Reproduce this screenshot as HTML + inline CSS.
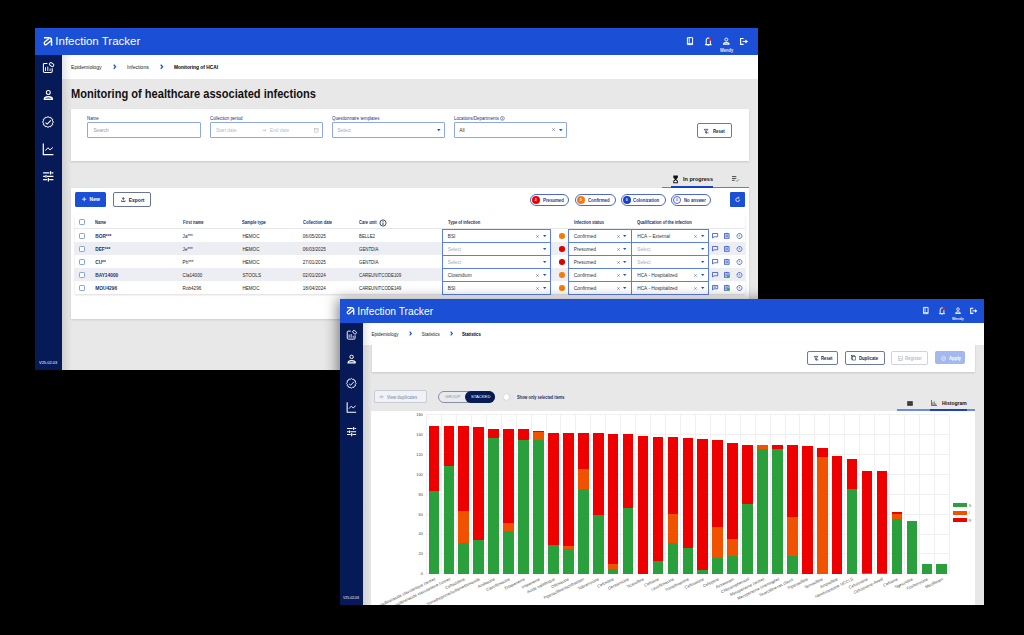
<!DOCTYPE html>
<html><head><meta charset="utf-8"><style>
html,body{margin:0;padding:0;}
body{width:1024px;height:635px;background:#000;position:relative;overflow:hidden;font-family:"Liberation Sans",sans-serif;}
body>div{position:absolute;box-sizing:border-box;}
.t{white-space:nowrap;line-height:1;}
</style></head><body>
<div style="left:35.00px;top:28.00px;width:723.00px;height:342.00px;background:#e8e8e8"></div>
<div style="left:35.00px;top:28.00px;width:723.00px;height:27.00px;background:#1b4fd6"></div>
<div style="left:35.00px;top:55.00px;width:27.00px;height:315.00px;background:#071a58"></div>
<div style="left:62.00px;top:55.00px;width:696.00px;height:24.00px;background:#fff"></div>
<svg style="position:absolute;overflow:visible;left:43.70px;top:37.20px;" width="8.60" height="8.70" viewBox="0 0 24 24" fill="none"><path d="M0 2.05 H13.5 Q21 2.05 21 9.5 V24" stroke="#fff" stroke-width="4.1"/><path d="M13.6 3.9 L2.03 14.04 A4.2 4.2 0 0 0 7.57 20.36 L19.2 10.2" stroke="#fff" stroke-width="3.7"/></svg>
<div class="t" style="left:55.30px;top:36.20px;font-size:11.5px;color:#fff;font-weight:normal;">Infection Tracker</div>
<svg style="position:absolute;overflow:visible;left:686.00px;top:36.00px;" width="64.00" height="11.00" viewBox="0 0 64 11" fill="none"><path d="M1.4 1.6 H6.6 V8.6 H1.4 Z" stroke="#fff" stroke-width="1"/><path d="M3.2 1.8 V6.6 M1.6 7.4 H6.4" stroke="#fff" stroke-width="0.9"/><path d="M20.2 8.1 V4.8 Q20.2 2 22.3 2 Q24.4 2 24.4 4.8 V8.1 L25.2 8.6 H19.4 Z" stroke="#fff" stroke-width="1.05" stroke-linejoin="round"/><path d="M21.5 9.3 H23.1" stroke="#fff" stroke-width="0.8"/><circle cx="24.1" cy="3.4" r="1.3" fill="#ee1111"/><circle cx="40.3" cy="3.6" r="1.5" stroke="#fff" stroke-width="0.95"/><path d="M37.5 8.3 Q37.5 6.6 40.3 6.6 Q43.1 6.6 43.1 8.3 Z" stroke="#fff" stroke-width="1.1" stroke-linejoin="round"/><path d="M57.6 2.5 H54.6 V8.3 H57.6" stroke="#fff" stroke-width="1.15"/><path d="M56.6 5.5 H60.4" stroke="#fff" stroke-width="1.1"/><path d="M59.4 3.5 L62 5.5 L59.4 7.5 Z" fill="#fff"/></svg>
<div class="t" style="left:720.20px;top:48.84px;font-size:4.6px;color:#e8ecff;font-weight:bold;transform:scaleX(0.88);transform-origin:0 0;">Wendy</div>
<svg style="position:absolute;overflow:visible;left:42.00px;top:61.00px;" width="13.00" height="13.00" viewBox="0 0 13 13" fill="none"><path d="M5.4 2.4 H2.6 Q1.4 2.4 1.4 3.6 V10.2 Q1.4 11.4 2.6 11.4 H9 Q10.2 11.4 10.2 10.2 V7.2" stroke="#fff" stroke-width="1.05"/><path d="M3.5 9.9 V6.2 M5.8 9.9 V5.6 M8.1 9.9 V7.6" stroke="#fff" stroke-width="0.95"/><rect x="7.3" y="2.2" width="4.6" height="2.8" rx="1.2" transform="rotate(38 9.6 3.6)" stroke="#fff" stroke-width="0.95"/></svg>
<svg style="position:absolute;overflow:visible;left:42.00px;top:87.00px;" width="13.00" height="14.00" viewBox="0 0 13 14" fill="none"><circle cx="6.3" cy="5.5" r="1.95" stroke="#fff" stroke-width="1.1"/><path d="M2.3 12.2 Q2.2 9.7 6.3 9.7 Q10.4 9.7 10.4 12.2 Z" stroke="#fff" stroke-width="1.4" stroke-linejoin="round"/></svg>
<svg style="position:absolute;overflow:visible;left:42.00px;top:116.00px;" width="12.00" height="12.00" viewBox="0 0 12 12" fill="none"><polygon points="6.00,0.50 7.19,1.56 8.75,1.24 9.25,2.75 10.76,3.25 10.44,4.81 11.50,6.00 10.44,7.19 10.76,8.75 9.25,9.25 8.75,10.76 7.19,10.44 6.00,11.50 4.81,10.44 3.25,10.76 2.75,9.25 1.24,8.75 1.56,7.19 0.50,6.00 1.56,4.81 1.24,3.25 2.75,2.75 3.25,1.24 4.81,1.56" stroke="#fff" stroke-width="1.0" stroke-linejoin="round"/><path d="M3.5 6.6 L5.2 8.1 L8.9 4.3" stroke="#fff" stroke-width="1.05"/></svg>
<svg style="position:absolute;overflow:visible;left:42.00px;top:142.00px;" width="13.00" height="14.00" viewBox="0 0 13 14" fill="none"><path d="M1.3 1.4 V12.7 H11.4" stroke="#fff" stroke-width="1.2"/><path d="M3.4 8.6 L5.9 5.8 L8 7.8 L10.9 5.4" stroke="#fff" stroke-width="1.0"/></svg>
<svg style="position:absolute;overflow:visible;left:42.00px;top:170.00px;" width="13.00" height="13.00" viewBox="0 0 13 13" fill="none"><path d="M1.1 2.8 H7.4 M9.5 2.8 H11.4 M1.1 6.4 H3.2 M5.0 6.4 H11.4 M1.1 9.6 H5.2 M7.3 9.6 H11.4" stroke="#fff" stroke-width="1.25"/><path d="M8.6 1.2 V4.4 M4.0 5.0 V7.8 M6.4 8.0 V11.4" stroke="#fff" stroke-width="1.25"/></svg>
<div class="t" style="left:39.00px;top:360.80px;font-size:4.2px;color:#fff;font-weight:normal;transform:scaleX(0.95);transform-origin:0 0;">V25.02.03</div>
<div style="left:62.00px;top:55.00px;width:10.00px;height:315.00px;background:linear-gradient(90deg,rgba(0,0,0,0.10),rgba(0,0,0,0))"></div>
<div class="t" style="left:71.00px;top:65.11px;font-size:5.1px;color:#222;font-weight:normal;">Epidemiology</div>
<svg style="position:absolute;overflow:visible;left:112.52px;top:64.20px;" width="3.36" height="5.60" viewBox="0 0 6 10" fill="none"><path d="M1.3 1.3 L4.6 5 L1.3 8.7" stroke="#2050d8" stroke-width="2.3"/></svg>
<div class="t" style="left:127.00px;top:65.11px;font-size:5.1px;color:#222;font-weight:normal;">Infections</div>
<svg style="position:absolute;overflow:visible;left:160.22px;top:64.20px;" width="3.36" height="5.60" viewBox="0 0 6 10" fill="none"><path d="M1.3 1.3 L4.6 5 L1.3 8.7" stroke="#2050d8" stroke-width="2.3"/></svg>
<div class="t" style="left:174.00px;top:65.94px;font-size:4.85px;color:#000;font-weight:bold;">Monitoring of HCAI</div>
<div class="t" style="left:71.00px;top:87.45px;font-size:13px;color:#111;font-weight:bold;transform:scaleX(0.852);transform-origin:0 0;">Monitoring of healthcare associated infections</div>
<div style="left:71.00px;top:109.00px;width:678.00px;height:52.00px;background:#fff;box-shadow:0 1px 2px rgba(0,0,0,0.15)"></div>
<div class="t" style="left:87.30px;top:117.02px;font-size:4.5px;color:#26306a;font-weight:normal;transform:scaleX(0.97);transform-origin:0 0;">Name</div>
<div style="left:87.30px;top:122.00px;width:113.50px;height:15.60px;border:1px solid #8fa6ea;border-radius:1px;background:#fff"></div>
<div class="t" style="left:93.40px;top:129.11px;font-size:4.8px;color:#999;font-weight:normal;">Search</div>
<div class="t" style="left:209.80px;top:117.02px;font-size:4.5px;color:#26306a;font-weight:normal;transform:scaleX(0.97);transform-origin:0 0;">Collection period</div>
<div style="left:209.80px;top:122.00px;width:113.20px;height:15.60px;border:1px solid #8fa6ea;border-radius:1px;background:#fff"></div>
<div class="t" style="left:215.90px;top:129.11px;font-size:4.8px;color:#bbb;font-weight:normal;">Start date</div>
<svg style="position:absolute;overflow:visible;left:261.50px;top:128.80px;" width="4.60" height="2.60" viewBox="0 0 10 6" fill="none"><path d="M0 3 H9 M6.5 0.8 L9 3 L6.5 5.2" stroke="#999" stroke-width="1"/></svg>
<div class="t" style="left:270.00px;top:129.11px;font-size:4.8px;color:#bbb;font-weight:normal;">End date</div>
<svg style="position:absolute;overflow:visible;left:313.50px;top:127.50px;" width="4.60" height="4.60" viewBox="0 0 10 10" fill="none"><rect x="1" y="1.5" width="8" height="7.5" stroke="#aaa" stroke-width="1"/><path d="M1 4 H9" stroke="#aaa"/></svg>
<div class="t" style="left:331.80px;top:117.02px;font-size:4.5px;color:#26306a;font-weight:normal;transform:scaleX(0.97);transform-origin:0 0;">Questionnaire templates</div>
<div style="left:331.80px;top:122.00px;width:112.80px;height:15.60px;border:1px solid #8fa6ea;border-radius:1px;background:#fff"></div>
<div class="t" style="left:337.60px;top:129.11px;font-size:4.8px;color:#aaa;font-weight:normal;">Select</div>
<svg style="position:absolute;overflow:visible;left:436.80px;top:128.92px;" width="3.60" height="2.16" viewBox="0 0 10 6" fill="none"><path d="M0 0 H10 L5 6 Z" fill="#2050d8"/></svg>
<div class="t" style="left:454.30px;top:117.02px;font-size:4.5px;color:#26306a;font-weight:normal;transform:scaleX(0.97);transform-origin:0 0;">Locations/Departments</div>
<svg style="position:absolute;overflow:visible;left:500.40px;top:116.00px;" width="4.80" height="4.80" viewBox="0 0 10 10" fill="none"><circle cx="5" cy="5" r="4" stroke="#1f2a55" stroke-width="1"/><path d="M5 4.2 V7.5 M5 2.5 V3.2" stroke="#1f2a55" stroke-width="1"/></svg>
<div style="left:454.30px;top:122.00px;width:112.60px;height:15.60px;border:1px solid #8fa6ea;border-radius:1px;background:#fff"></div>
<div class="t" style="left:459.20px;top:129.11px;font-size:4.8px;color:#333;font-weight:normal;">All</div>
<svg style="position:absolute;overflow:visible;left:551.90px;top:128.40px;" width="3.20" height="3.20" viewBox="0 0 10 10" fill="none"><path d="M1 1 L9 9 M9 1 L1 9" stroke="#4a64c0" stroke-width="1.9"/></svg>
<svg style="position:absolute;overflow:visible;left:559.00px;top:128.92px;" width="3.60" height="2.16" viewBox="0 0 10 6" fill="none"><path d="M0 0 H10 L5 6 Z" fill="#2050d8"/></svg>
<div style="left:697.20px;top:123.20px;width:34.60px;height:15.00px;border:1px solid #6f789e;border-radius:2px;background:#fff"></div>
<svg style="position:absolute;overflow:visible;left:704.40px;top:128.60px;" width="4.60" height="4.60" viewBox="0 0 10 10" fill="none"><path d="M0.5 0.8 H8.5 L5.5 4.5 V9.5 L3.5 8.5 V4.5 Z" stroke="#1f2a55" stroke-width="1.5"/><path d="M7 7 L9.5 9.5 M9.5 7 L7 9.5" stroke="#1f2a55" stroke-width="1"/></svg>
<div class="t" style="left:713.00px;top:129.84px;font-size:4.8px;color:#1a2250;font-weight:bold;transform:scaleX(0.9);transform-origin:0 0;">Reset</div>
<div style="left:662.00px;top:186.90px;width:87.00px;height:1.30px;background:#5a7ee6"></div>
<div style="left:671.00px;top:186.20px;width:42.00px;height:2.00px;background:#1840c8"></div>
<svg style="position:absolute;overflow:visible;left:672.60px;top:174.60px;" width="5.20" height="8.60" viewBox="0 0 10 16" fill="none"><path d="M0.6 0.6 H9.4 V5 L6.2 8 L9.4 11 V15.4 H0.6 V11 L3.8 8 L0.6 5 Z" fill="#111"/><path d="M2.4 13.8 V11.8 L5 9.6 L7.6 11.8 V13.8 Z" fill="#fff"/></svg>
<div class="t" style="left:683.00px;top:177.13px;font-size:5.5px;color:#111;font-weight:bold;">In progress</div>
<svg style="position:absolute;overflow:visible;left:731.50px;top:176.30px;" width="7.60" height="6.00" viewBox="0 0 14 11" fill="none"><path d="M0 1 H8 M0 4.5 H8 M0 8 H5" stroke="#222" stroke-width="1.4"/><path d="M7.5 8 L9.5 10 L13 6" stroke="#2a9d3a" stroke-width="1.4"/></svg>
<div style="left:71.00px;top:188.00px;width:678.00px;height:131.00px;background:#fff;box-shadow:0 1px 2px rgba(0,0,0,0.12)"></div>
<div style="left:74.60px;top:192.20px;width:31.20px;height:14.60px;background:#1b4fd6;border-radius:1.5px"></div>
<svg style="position:absolute;overflow:visible;left:81.60px;top:197.40px;" width="4.40" height="4.40" viewBox="0 0 4.4 4.4" fill="none"><path d="M2.2 0.2 V4.2 M0.2 2.2 H4.2" stroke="#fff" stroke-width="0.8"/></svg>
<div class="t" style="left:89.60px;top:197.44px;font-size:5px;color:#fff;font-weight:bold;">New</div>
<div style="left:113.30px;top:192.20px;width:37.40px;height:14.80px;border:1px solid #6a7399;border-radius:2px;background:#fff"></div>
<svg style="position:absolute;overflow:visible;left:120.60px;top:196.60px;" width="4.60" height="5.00" viewBox="0 0 10 11" fill="none"><path d="M5 7.5 V1.5 M2.2 4.2 L5 1.4 L7.8 4.2 M1 9.8 H9 M1 7.5 V9.8 M9 7.5 V9.8" stroke="#1f2a55" stroke-width="1.7"/></svg>
<div class="t" style="left:128.70px;top:197.54px;font-size:5px;color:#1f2a55;font-weight:bold;">Export</div>
<div style="left:530.10px;top:194.00px;width:39.30px;height:11.50px;border:1px solid #4a68d0;border-radius:6px;background:#fff"></div>
<div style="left:531.80px;top:195.6px;width:8.4px;height:8.4px;border-radius:50%;box-sizing:border-box;background:#ee0000"></div>
<div class="t" style="left:534.80px;top:198.66px;font-size:3.4px;color:#fff;font-weight:bold;">2</div>
<div class="t" style="left:543.10px;top:198.74px;font-size:4.7px;color:#2b3a86;font-weight:bold;transform:scaleX(0.92);transform-origin:0 0;">Presumed</div>
<div style="left:575.00px;top:194.00px;width:40.50px;height:11.50px;border:1px solid #4a68d0;border-radius:6px;background:#fff"></div>
<div style="left:576.70px;top:195.6px;width:8.4px;height:8.4px;border-radius:50%;box-sizing:border-box;background:#f47c0c"></div>
<div class="t" style="left:579.70px;top:198.66px;font-size:3.4px;color:#fff;font-weight:bold;">3</div>
<div class="t" style="left:587.80px;top:198.74px;font-size:4.7px;color:#2b3a86;font-weight:bold;transform:scaleX(0.92);transform-origin:0 0;">Confirmed</div>
<div style="left:621.00px;top:194.00px;width:44.60px;height:11.50px;border:1px solid #4a68d0;border-radius:6px;background:#fff"></div>
<div style="left:622.70px;top:195.6px;width:8.4px;height:8.4px;border-radius:50%;box-sizing:border-box;background:#1b40c8"></div>
<div class="t" style="left:625.70px;top:198.66px;font-size:3.4px;color:#fff;font-weight:bold;">0</div>
<div class="t" style="left:633.40px;top:198.74px;font-size:4.75px;color:#2b3a86;font-weight:bold;transform:scaleX(0.92);transform-origin:0 0;">Colonization</div>
<div style="left:671.20px;top:194.00px;width:40.20px;height:11.50px;border:1px solid #4a68d0;border-radius:6px;background:#fff"></div>
<div style="left:672.90px;top:195.6px;width:8.4px;height:8.4px;border-radius:50%;box-sizing:border-box;border:0.8px solid #4a68d0;background:#fff"></div>
<div class="t" style="left:675.90px;top:198.66px;font-size:3.4px;color:#4a68d0;font-weight:bold;">0</div>
<div class="t" style="left:683.50px;top:198.74px;font-size:4.7px;color:#2b3a86;font-weight:bold;transform:scaleX(0.92);transform-origin:0 0;">No answer</div>
<div style="left:730.00px;top:192.00px;width:15.00px;height:15.00px;background:#1b4fd6;border-radius:1px"></div>
<svg style="position:absolute;overflow:visible;left:734.80px;top:196.80px;" width="5.40" height="5.40" viewBox="0 0 10 10" fill="none"><path d="M8.5 5 A3.5 3.5 0 1 1 5 1.5 H7" stroke="#fff" stroke-width="1.4"/><path d="M6 0 L8 1.5 L6 3" stroke="#fff" stroke-width="1.2"/></svg>
<div style="left:74.60px;top:215.20px;width:670.40px;height:78.40px;background:#fff;box-shadow:0 0.5px 2px rgba(0,0,0,0.15)"></div>
<div style="left:74.40px;top:228.20px;width:670.60px;height:0.70px;background:#e4e7ef"></div>
<div style="left:74.40px;top:242.00px;width:670.60px;height:13.00px;background:#eceef3"></div>
<div style="left:74.40px;top:268.00px;width:670.60px;height:13.00px;background:#eceef3"></div>
<div style="left:78.70px;top:219.10px;width:6.20px;height:6.20px;border:0.8px solid #86a0ec;border-radius:1.2px;background:#fff"></div>
<div class="t" style="left:95.20px;top:221.34px;font-size:4.5px;color:#283060;font-weight:bold;transform:scaleX(0.9);transform-origin:0 0;">Name</div>
<div class="t" style="left:182.60px;top:221.34px;font-size:4.5px;color:#283060;font-weight:bold;transform:scaleX(0.9);transform-origin:0 0;">First name</div>
<div class="t" style="left:242.40px;top:221.34px;font-size:4.5px;color:#283060;font-weight:bold;transform:scaleX(0.9);transform-origin:0 0;">Sample type</div>
<div class="t" style="left:302.80px;top:221.34px;font-size:4.5px;color:#283060;font-weight:bold;transform:scaleX(0.9);transform-origin:0 0;">Collection date</div>
<div class="t" style="left:358.50px;top:221.34px;font-size:4.5px;color:#283060;font-weight:bold;transform:scaleX(0.9);transform-origin:0 0;">Care unit</div>
<div class="t" style="left:447.70px;top:221.34px;font-size:4.5px;color:#283060;font-weight:bold;transform:scaleX(0.9);transform-origin:0 0;">Type of infection</div>
<div class="t" style="left:573.70px;top:221.34px;font-size:4.5px;color:#283060;font-weight:bold;transform:scaleX(0.9);transform-origin:0 0;">Infection status</div>
<div class="t" style="left:637.20px;top:221.34px;font-size:4.5px;color:#283060;font-weight:bold;transform:scaleX(0.9);transform-origin:0 0;">Qualification of the infection</div>
<svg style="position:absolute;overflow:visible;left:379.20px;top:218.60px;" width="8.00" height="8.00" viewBox="0 0 8 8" fill="none"><circle cx="4" cy="4" r="3.1" stroke="#1f2a55" stroke-width="0.85"/><path d="M4 3.5 V6 M4 2 V2.8" stroke="#1f2a55" stroke-width="0.9"/></svg>
<div style="left:78.70px;top:233.00px;width:6.20px;height:6.20px;border:0.8px solid #86a0ec;border-radius:1.2px;background:#fff"></div>
<div class="t" style="left:95.20px;top:235.04px;font-size:4.8px;color:#23306a;font-weight:bold;">BOR***</div>
<div class="t" style="left:182.60px;top:235.21px;font-size:4.6px;color:#262626;font-weight:normal;">Ja***</div>
<div class="t" style="left:242.40px;top:235.21px;font-size:4.6px;color:#262626;font-weight:normal;">HEMOC</div>
<div class="t" style="left:302.80px;top:235.21px;font-size:4.6px;color:#262626;font-weight:normal;">06/05/2025</div>
<div class="t" style="left:358.50px;top:235.21px;font-size:4.7px;color:#262626;font-weight:normal;transform:scaleX(0.93);transform-origin:0 0;">BELLE2</div>
<div style="left:442.00px;top:229.00px;width:109.00px;height:14.00px;border:1px solid #5b7fe0;background:#fff"></div>
<div class="t" style="left:447.70px;top:235.21px;font-size:4.8px;color:#333;font-weight:normal;">BSI</div>
<svg style="position:absolute;overflow:visible;left:536.00px;top:234.60px;" width="3.00" height="3.00" viewBox="0 0 10 10" fill="none"><path d="M1 1 L9 9 M9 1 L1 9" stroke="#4a64c0" stroke-width="1.9"/></svg>
<svg style="position:absolute;overflow:visible;left:542.80px;top:235.08px;" width="3.40" height="2.04" viewBox="0 0 10 6" fill="none"><path d="M0 0 H10 L5 6 Z" fill="#2050d8"/></svg>
<div style="left:559.3px;top:233.30px;width:5.6px;height:5.6px;border-radius:50%;background:#f47c0c"></div>
<div style="left:568.00px;top:229.00px;width:64.00px;height:14.00px;border:1px solid #5b7fe0;background:#fff"></div>
<div class="t" style="left:573.70px;top:235.21px;font-size:4.9px;color:#333;font-weight:normal;">Confirmed</div>
<svg style="position:absolute;overflow:visible;left:617.00px;top:234.60px;" width="3.00" height="3.00" viewBox="0 0 10 10" fill="none"><path d="M1 1 L9 9 M9 1 L1 9" stroke="#4a64c0" stroke-width="1.9"/></svg>
<svg style="position:absolute;overflow:visible;left:623.30px;top:235.08px;" width="3.40" height="2.04" viewBox="0 0 10 6" fill="none"><path d="M0 0 H10 L5 6 Z" fill="#2050d8"/></svg>
<div style="left:631.00px;top:229.00px;width:78.00px;height:14.00px;border:1px solid #5b7fe0;background:#fff"></div>
<div class="t" style="left:637.20px;top:235.21px;font-size:4.8px;color:#333;font-weight:normal;">HCA – External</div>
<svg style="position:absolute;overflow:visible;left:694.30px;top:234.60px;" width="3.00" height="3.00" viewBox="0 0 10 10" fill="none"><path d="M1 1 L9 9 M9 1 L1 9" stroke="#4a64c0" stroke-width="1.9"/></svg>
<svg style="position:absolute;overflow:visible;left:701.10px;top:235.08px;" width="3.40" height="2.04" viewBox="0 0 10 6" fill="none"><path d="M0 0 H10 L5 6 Z" fill="#2050d8"/></svg>
<svg style="position:absolute;overflow:visible;left:712.10px;top:233.40px;" width="6.20" height="5.40" viewBox="0 0 6.2 5.4" fill="none"><path d="M0.5 0.5 H5.7 V3.8 H2.1 L0.5 5 Z" stroke="#3a5ad0" stroke-width="0.85" stroke-linejoin="round"/></svg>
<svg style="position:absolute;overflow:visible;left:724.10px;top:233.30px;" width="5.60" height="5.80" viewBox="0 0 5.6 5.8" fill="none"><rect x="0.5" y="0.7" width="4.6" height="4.6" fill="#c9d4f4" stroke="#3a5ad0" stroke-width="0.8"/><path d="M1.5 2.3 H4.1 M1.5 3.6 H4.1" stroke="#3a5ad0" stroke-width="0.6"/><path d="M1.8 0.4 H3.8" stroke="#3a5ad0" stroke-width="0.8"/></svg>
<svg style="position:absolute;overflow:visible;left:736.10px;top:233.20px;" width="6.00" height="5.80" viewBox="0 0 6 5.8" fill="none"><path d="M1.2 2.0 A2.5 2.5 0 1 1 1.3 4.2" stroke="#3a5ad0" stroke-width="0.8"/><path d="M0.2 2.9 H2.2" stroke="#3a5ad0" stroke-width="0.8"/><path d="M3.5 1.8 V3.1 L4.3 3.7" stroke="#3a5ad0" stroke-width="0.6"/></svg>
<div style="left:78.70px;top:246.00px;width:6.20px;height:6.20px;border:0.8px solid #86a0ec;border-radius:1.2px;background:#fff"></div>
<div class="t" style="left:95.20px;top:248.04px;font-size:4.8px;color:#23306a;font-weight:bold;">DEF***</div>
<div class="t" style="left:182.60px;top:248.21px;font-size:4.6px;color:#262626;font-weight:normal;">Je***</div>
<div class="t" style="left:242.40px;top:248.21px;font-size:4.6px;color:#262626;font-weight:normal;">HEMOC</div>
<div class="t" style="left:302.80px;top:248.21px;font-size:4.6px;color:#262626;font-weight:normal;">06/03/2025</div>
<div class="t" style="left:358.50px;top:248.21px;font-size:4.7px;color:#262626;font-weight:normal;transform:scaleX(0.93);transform-origin:0 0;">GENTDIA</div>
<div style="left:442.00px;top:242.00px;width:109.00px;height:14.00px;border:1px solid #5b7fe0;background:#fff"></div>
<div class="t" style="left:447.70px;top:248.21px;font-size:4.8px;color:#aaa;font-weight:normal;">Select</div>
<svg style="position:absolute;overflow:visible;left:542.80px;top:248.08px;" width="3.40" height="2.04" viewBox="0 0 10 6" fill="none"><path d="M0 0 H10 L5 6 Z" fill="#2050d8"/></svg>
<div style="left:559.3px;top:246.30px;width:5.6px;height:5.6px;border-radius:50%;background:#e00000"></div>
<div style="left:568.00px;top:242.00px;width:64.00px;height:14.00px;border:1px solid #5b7fe0;background:#fff"></div>
<div class="t" style="left:573.70px;top:248.21px;font-size:4.9px;color:#333;font-weight:normal;">Presumed</div>
<svg style="position:absolute;overflow:visible;left:617.00px;top:247.60px;" width="3.00" height="3.00" viewBox="0 0 10 10" fill="none"><path d="M1 1 L9 9 M9 1 L1 9" stroke="#4a64c0" stroke-width="1.9"/></svg>
<svg style="position:absolute;overflow:visible;left:623.30px;top:248.08px;" width="3.40" height="2.04" viewBox="0 0 10 6" fill="none"><path d="M0 0 H10 L5 6 Z" fill="#2050d8"/></svg>
<div style="left:631.00px;top:242.00px;width:78.00px;height:14.00px;border:1px solid #5b7fe0;background:#fff"></div>
<div class="t" style="left:637.20px;top:248.21px;font-size:4.8px;color:#aaa;font-weight:normal;">Select</div>
<svg style="position:absolute;overflow:visible;left:701.10px;top:248.08px;" width="3.40" height="2.04" viewBox="0 0 10 6" fill="none"><path d="M0 0 H10 L5 6 Z" fill="#2050d8"/></svg>
<svg style="position:absolute;overflow:visible;left:712.10px;top:246.40px;" width="6.20" height="5.40" viewBox="0 0 6.2 5.4" fill="none"><path d="M0.5 0.5 H5.7 V3.8 H2.1 L0.5 5 Z" stroke="#3a5ad0" stroke-width="0.85" stroke-linejoin="round"/></svg>
<svg style="position:absolute;overflow:visible;left:724.10px;top:246.30px;" width="5.60" height="5.80" viewBox="0 0 5.6 5.8" fill="none"><rect x="0.5" y="0.7" width="4.6" height="4.6" fill="#c9d4f4" stroke="#3a5ad0" stroke-width="0.8"/><path d="M1.5 2.3 H4.1 M1.5 3.6 H4.1" stroke="#3a5ad0" stroke-width="0.6"/><path d="M1.8 0.4 H3.8" stroke="#3a5ad0" stroke-width="0.8"/></svg>
<svg style="position:absolute;overflow:visible;left:736.10px;top:246.20px;" width="6.00" height="5.80" viewBox="0 0 6 5.8" fill="none"><path d="M1.2 2.0 A2.5 2.5 0 1 1 1.3 4.2" stroke="#3a5ad0" stroke-width="0.8"/><path d="M0.2 2.9 H2.2" stroke="#3a5ad0" stroke-width="0.8"/><path d="M3.5 1.8 V3.1 L4.3 3.7" stroke="#3a5ad0" stroke-width="0.6"/></svg>
<div style="left:78.70px;top:259.00px;width:6.20px;height:6.20px;border:0.8px solid #86a0ec;border-radius:1.2px;background:#fff"></div>
<div class="t" style="left:95.20px;top:261.04px;font-size:4.8px;color:#23306a;font-weight:bold;">CU**</div>
<div class="t" style="left:182.60px;top:261.21px;font-size:4.6px;color:#262626;font-weight:normal;">Ph***</div>
<div class="t" style="left:242.40px;top:261.21px;font-size:4.6px;color:#262626;font-weight:normal;">HEMOC</div>
<div class="t" style="left:302.80px;top:261.21px;font-size:4.6px;color:#262626;font-weight:normal;">27/01/2025</div>
<div class="t" style="left:358.50px;top:261.21px;font-size:4.7px;color:#262626;font-weight:normal;transform:scaleX(0.93);transform-origin:0 0;">GENTDIA</div>
<div style="left:442.00px;top:255.00px;width:109.00px;height:14.00px;border:1px solid #5b7fe0;background:#fff"></div>
<div class="t" style="left:447.70px;top:261.21px;font-size:4.8px;color:#aaa;font-weight:normal;">Select</div>
<svg style="position:absolute;overflow:visible;left:542.80px;top:261.08px;" width="3.40" height="2.04" viewBox="0 0 10 6" fill="none"><path d="M0 0 H10 L5 6 Z" fill="#2050d8"/></svg>
<div style="left:559.3px;top:259.30px;width:5.6px;height:5.6px;border-radius:50%;background:#e00000"></div>
<div style="left:568.00px;top:255.00px;width:64.00px;height:14.00px;border:1px solid #5b7fe0;background:#fff"></div>
<div class="t" style="left:573.70px;top:261.21px;font-size:4.9px;color:#333;font-weight:normal;">Presumed</div>
<svg style="position:absolute;overflow:visible;left:617.00px;top:260.60px;" width="3.00" height="3.00" viewBox="0 0 10 10" fill="none"><path d="M1 1 L9 9 M9 1 L1 9" stroke="#4a64c0" stroke-width="1.9"/></svg>
<svg style="position:absolute;overflow:visible;left:623.30px;top:261.08px;" width="3.40" height="2.04" viewBox="0 0 10 6" fill="none"><path d="M0 0 H10 L5 6 Z" fill="#2050d8"/></svg>
<div style="left:631.00px;top:255.00px;width:78.00px;height:14.00px;border:1px solid #5b7fe0;background:#fff"></div>
<div class="t" style="left:637.20px;top:261.21px;font-size:4.8px;color:#aaa;font-weight:normal;">Select</div>
<svg style="position:absolute;overflow:visible;left:701.10px;top:261.08px;" width="3.40" height="2.04" viewBox="0 0 10 6" fill="none"><path d="M0 0 H10 L5 6 Z" fill="#2050d8"/></svg>
<svg style="position:absolute;overflow:visible;left:712.10px;top:259.40px;" width="6.20" height="5.40" viewBox="0 0 6.2 5.4" fill="none"><path d="M0.5 0.5 H5.7 V3.8 H2.1 L0.5 5 Z" stroke="#3a5ad0" stroke-width="0.85" stroke-linejoin="round"/></svg>
<svg style="position:absolute;overflow:visible;left:724.10px;top:259.30px;" width="5.60" height="5.80" viewBox="0 0 5.6 5.8" fill="none"><rect x="0.5" y="0.7" width="4.6" height="4.6" fill="#c9d4f4" stroke="#3a5ad0" stroke-width="0.8"/><path d="M1.5 2.3 H4.1 M1.5 3.6 H4.1" stroke="#3a5ad0" stroke-width="0.6"/><path d="M1.8 0.4 H3.8" stroke="#3a5ad0" stroke-width="0.8"/></svg>
<svg style="position:absolute;overflow:visible;left:736.10px;top:259.20px;" width="6.00" height="5.80" viewBox="0 0 6 5.8" fill="none"><path d="M1.2 2.0 A2.5 2.5 0 1 1 1.3 4.2" stroke="#3a5ad0" stroke-width="0.8"/><path d="M0.2 2.9 H2.2" stroke="#3a5ad0" stroke-width="0.8"/><path d="M3.5 1.8 V3.1 L4.3 3.7" stroke="#3a5ad0" stroke-width="0.6"/></svg>
<div style="left:78.70px;top:272.00px;width:6.20px;height:6.20px;border:0.8px solid #86a0ec;border-radius:1.2px;background:#fff"></div>
<div class="t" style="left:95.20px;top:274.04px;font-size:4.8px;color:#23306a;font-weight:bold;">BAY14000</div>
<div class="t" style="left:182.60px;top:274.21px;font-size:4.6px;color:#262626;font-weight:normal;">Cla14000</div>
<div class="t" style="left:242.40px;top:274.21px;font-size:4.6px;color:#262626;font-weight:normal;">STOOLS</div>
<div class="t" style="left:302.80px;top:274.21px;font-size:4.6px;color:#262626;font-weight:normal;">02/01/2024</div>
<div class="t" style="left:358.50px;top:274.21px;font-size:4.7px;color:#262626;font-weight:normal;transform:scaleX(0.93);transform-origin:0 0;">CAREUNITCODE109</div>
<div style="left:442.00px;top:268.00px;width:109.00px;height:14.00px;border:1px solid #5b7fe0;background:#fff"></div>
<div class="t" style="left:447.70px;top:274.21px;font-size:4.8px;color:#333;font-weight:normal;">Clostridium</div>
<svg style="position:absolute;overflow:visible;left:536.00px;top:273.60px;" width="3.00" height="3.00" viewBox="0 0 10 10" fill="none"><path d="M1 1 L9 9 M9 1 L1 9" stroke="#4a64c0" stroke-width="1.9"/></svg>
<svg style="position:absolute;overflow:visible;left:542.80px;top:274.08px;" width="3.40" height="2.04" viewBox="0 0 10 6" fill="none"><path d="M0 0 H10 L5 6 Z" fill="#2050d8"/></svg>
<div style="left:559.3px;top:272.30px;width:5.6px;height:5.6px;border-radius:50%;background:#f47c0c"></div>
<div style="left:568.00px;top:268.00px;width:64.00px;height:14.00px;border:1px solid #5b7fe0;background:#fff"></div>
<div class="t" style="left:573.70px;top:274.21px;font-size:4.9px;color:#333;font-weight:normal;">Confirmed</div>
<svg style="position:absolute;overflow:visible;left:617.00px;top:273.60px;" width="3.00" height="3.00" viewBox="0 0 10 10" fill="none"><path d="M1 1 L9 9 M9 1 L1 9" stroke="#4a64c0" stroke-width="1.9"/></svg>
<svg style="position:absolute;overflow:visible;left:623.30px;top:274.08px;" width="3.40" height="2.04" viewBox="0 0 10 6" fill="none"><path d="M0 0 H10 L5 6 Z" fill="#2050d8"/></svg>
<div style="left:631.00px;top:268.00px;width:78.00px;height:14.00px;border:1px solid #5b7fe0;background:#fff"></div>
<div class="t" style="left:637.20px;top:274.21px;font-size:4.8px;color:#333;font-weight:normal;">HCA - Hospitalized</div>
<svg style="position:absolute;overflow:visible;left:694.30px;top:273.60px;" width="3.00" height="3.00" viewBox="0 0 10 10" fill="none"><path d="M1 1 L9 9 M9 1 L1 9" stroke="#4a64c0" stroke-width="1.9"/></svg>
<svg style="position:absolute;overflow:visible;left:701.10px;top:274.08px;" width="3.40" height="2.04" viewBox="0 0 10 6" fill="none"><path d="M0 0 H10 L5 6 Z" fill="#2050d8"/></svg>
<svg style="position:absolute;overflow:visible;left:712.10px;top:272.40px;" width="6.20" height="5.40" viewBox="0 0 6.2 5.4" fill="none"><path d="M0.5 0.5 H5.7 V3.8 H2.1 L0.5 5 Z" stroke="#3a5ad0" stroke-width="0.85" stroke-linejoin="round"/></svg>
<svg style="position:absolute;overflow:visible;left:724.10px;top:272.30px;" width="5.60" height="5.80" viewBox="0 0 5.6 5.8" fill="none"><rect x="0.5" y="0.7" width="4.6" height="4.6" fill="#c9d4f4" stroke="#3a5ad0" stroke-width="0.8"/><path d="M1.5 2.3 H4.1 M1.5 3.6 H4.1" stroke="#3a5ad0" stroke-width="0.6"/><path d="M1.8 0.4 H3.8" stroke="#3a5ad0" stroke-width="0.8"/><circle cx="4.4" cy="4.5" r="1.4" fill="#3cb54a"/></svg>
<svg style="position:absolute;overflow:visible;left:736.10px;top:272.20px;" width="6.00" height="5.80" viewBox="0 0 6 5.8" fill="none"><path d="M1.2 2.0 A2.5 2.5 0 1 1 1.3 4.2" stroke="#3a5ad0" stroke-width="0.8"/><path d="M0.2 2.9 H2.2" stroke="#3a5ad0" stroke-width="0.8"/><path d="M3.5 1.8 V3.1 L4.3 3.7" stroke="#3a5ad0" stroke-width="0.6"/></svg>
<div style="left:78.70px;top:285.00px;width:6.20px;height:6.20px;border:0.8px solid #86a0ec;border-radius:1.2px;background:#fff"></div>
<div class="t" style="left:95.20px;top:287.04px;font-size:4.8px;color:#23306a;font-weight:bold;">MOU4296</div>
<div class="t" style="left:182.60px;top:287.21px;font-size:4.6px;color:#262626;font-weight:normal;">Rob4296</div>
<div class="t" style="left:242.40px;top:287.21px;font-size:4.6px;color:#262626;font-weight:normal;">HEMOC</div>
<div class="t" style="left:302.80px;top:287.21px;font-size:4.6px;color:#262626;font-weight:normal;">18/04/2024</div>
<div class="t" style="left:358.50px;top:287.21px;font-size:4.7px;color:#262626;font-weight:normal;transform:scaleX(0.93);transform-origin:0 0;">CAREUNITCODE149</div>
<div style="left:442.00px;top:281.00px;width:109.00px;height:14.00px;border:1px solid #5b7fe0;background:#fff"></div>
<div class="t" style="left:447.70px;top:287.21px;font-size:4.8px;color:#333;font-weight:normal;">BSI</div>
<svg style="position:absolute;overflow:visible;left:536.00px;top:286.60px;" width="3.00" height="3.00" viewBox="0 0 10 10" fill="none"><path d="M1 1 L9 9 M9 1 L1 9" stroke="#4a64c0" stroke-width="1.9"/></svg>
<svg style="position:absolute;overflow:visible;left:542.80px;top:287.08px;" width="3.40" height="2.04" viewBox="0 0 10 6" fill="none"><path d="M0 0 H10 L5 6 Z" fill="#2050d8"/></svg>
<div style="left:559.3px;top:285.30px;width:5.6px;height:5.6px;border-radius:50%;background:#f47c0c"></div>
<div style="left:568.00px;top:281.00px;width:64.00px;height:14.00px;border:1px solid #5b7fe0;background:#fff"></div>
<div class="t" style="left:573.70px;top:287.21px;font-size:4.9px;color:#333;font-weight:normal;">Confirmed</div>
<svg style="position:absolute;overflow:visible;left:617.00px;top:286.60px;" width="3.00" height="3.00" viewBox="0 0 10 10" fill="none"><path d="M1 1 L9 9 M9 1 L1 9" stroke="#4a64c0" stroke-width="1.9"/></svg>
<svg style="position:absolute;overflow:visible;left:623.30px;top:287.08px;" width="3.40" height="2.04" viewBox="0 0 10 6" fill="none"><path d="M0 0 H10 L5 6 Z" fill="#2050d8"/></svg>
<div style="left:631.00px;top:281.00px;width:78.00px;height:14.00px;border:1px solid #5b7fe0;background:#fff"></div>
<div class="t" style="left:637.20px;top:287.21px;font-size:4.8px;color:#333;font-weight:normal;">HCA - Hospitalized</div>
<svg style="position:absolute;overflow:visible;left:694.30px;top:286.60px;" width="3.00" height="3.00" viewBox="0 0 10 10" fill="none"><path d="M1 1 L9 9 M9 1 L1 9" stroke="#4a64c0" stroke-width="1.9"/></svg>
<svg style="position:absolute;overflow:visible;left:701.10px;top:287.08px;" width="3.40" height="2.04" viewBox="0 0 10 6" fill="none"><path d="M0 0 H10 L5 6 Z" fill="#2050d8"/></svg>
<svg style="position:absolute;overflow:visible;left:712.10px;top:285.40px;" width="6.20" height="5.40" viewBox="0 0 6.2 5.4" fill="none"><path d="M0.5 0.5 H5.7 V3.8 H2.1 L0.5 5 Z" stroke="#3a5ad0" stroke-width="0.85" stroke-linejoin="round"/><path d="M1.6 1.7 H4.6 M1.6 2.7 H4" stroke="#3a5ad0" stroke-width="0.6"/></svg>
<svg style="position:absolute;overflow:visible;left:724.10px;top:285.30px;" width="5.60" height="5.80" viewBox="0 0 5.6 5.8" fill="none"><rect x="0.5" y="0.7" width="4.6" height="4.6" fill="#c9d4f4" stroke="#3a5ad0" stroke-width="0.8"/><path d="M1.5 2.3 H4.1 M1.5 3.6 H4.1" stroke="#3a5ad0" stroke-width="0.6"/><path d="M1.8 0.4 H3.8" stroke="#3a5ad0" stroke-width="0.8"/><circle cx="4.4" cy="4.5" r="1.4" fill="#3cb54a"/></svg>
<svg style="position:absolute;overflow:visible;left:736.10px;top:285.20px;" width="6.00" height="5.80" viewBox="0 0 6 5.8" fill="none"><path d="M1.2 2.0 A2.5 2.5 0 1 1 1.3 4.2" stroke="#3a5ad0" stroke-width="0.8"/><path d="M0.2 2.9 H2.2" stroke="#3a5ad0" stroke-width="0.8"/><path d="M3.5 1.8 V3.1 L4.3 3.7" stroke="#3a5ad0" stroke-width="0.6"/></svg>
<div style="left:340.00px;top:299.00px;width:644.00px;height:306.00px;background:transparent;box-shadow:-3px 0 12px rgba(0,0,0,0.45)"></div>
<div style="left:340.00px;top:299.00px;width:644.00px;height:306.00px;background:#e8e8e8"></div>
<div style="left:340.00px;top:299.00px;width:644.00px;height:24.00px;background:#1b4fd6"></div>
<div style="left:340.00px;top:323.00px;width:23.00px;height:282.00px;background:#071a58"></div>
<div style="left:363.00px;top:323.00px;width:621.00px;height:21.60px;background:#fff"></div>
<div style="left:372.00px;top:344.00px;width:603.00px;height:27.80px;background:#fff;box-shadow:0 1px 2px rgba(0,0,0,0.15)"></div>
<div style="left:363.00px;top:323.00px;width:9.00px;height:282.00px;background:linear-gradient(90deg,rgba(0,0,0,0.10),rgba(0,0,0,0))"></div>
<svg style="position:absolute;overflow:visible;left:347.10px;top:307.10px;" width="7.70" height="7.70" viewBox="0 0 24 24" fill="none"><path d="M0 2.05 H13.5 Q21 2.05 21 9.5 V24" stroke="#fff" stroke-width="4.1"/><path d="M13.6 3.9 L2.03 14.04 A4.2 4.2 0 0 0 7.57 20.36 L19.2 10.2" stroke="#fff" stroke-width="3.7"/></svg>
<div class="t" style="left:357.30px;top:306.90px;font-size:10.25px;color:#fff;font-weight:normal;">Infection Tracker</div>
<svg style="position:absolute;overflow:visible;left:921.81px;top:306.11px;" width="57.28" height="9.78" viewBox="0 0 64 11" fill="none"><path d="M1.4 1.6 H6.6 V8.6 H1.4 Z" stroke="#fff" stroke-width="1"/><path d="M3.2 1.8 V6.6 M1.6 7.4 H6.4" stroke="#fff" stroke-width="0.9"/><path d="M20.2 8.1 V4.8 Q20.2 2 22.3 2 Q24.4 2 24.4 4.8 V8.1 L25.2 8.6 H19.4 Z" stroke="#fff" stroke-width="1.05" stroke-linejoin="round"/><path d="M21.5 9.3 H23.1" stroke="#fff" stroke-width="0.8"/><circle cx="24.1" cy="3.4" r="1.3" fill="#ee1111"/><circle cx="40.3" cy="3.6" r="1.5" stroke="#fff" stroke-width="0.95"/><path d="M37.5 8.3 Q37.5 6.6 40.3 6.6 Q43.1 6.6 43.1 8.3 Z" stroke="#fff" stroke-width="1.1" stroke-linejoin="round"/><path d="M57.6 2.5 H54.6 V8.3 H57.6" stroke="#fff" stroke-width="1.15"/><path d="M56.6 5.5 H60.4" stroke="#fff" stroke-width="1.1"/><path d="M59.4 3.5 L62 5.5 L59.4 7.5 Z" fill="#fff"/></svg>
<div class="t" style="left:952.30px;top:316.80px;font-size:4.1px;color:#e8ecff;font-weight:bold;transform:scaleX(0.88);transform-origin:0 0;">Wendy</div>
<svg style="position:absolute;overflow:visible;left:346.23px;top:328.87px;" width="11.57" height="11.57" viewBox="0 0 13 13" fill="none"><path d="M5.4 2.4 H2.6 Q1.4 2.4 1.4 3.6 V10.2 Q1.4 11.4 2.6 11.4 H9 Q10.2 11.4 10.2 10.2 V7.2" stroke="#fff" stroke-width="1.05"/><path d="M3.5 9.9 V6.2 M5.8 9.9 V5.6 M8.1 9.9 V7.6" stroke="#fff" stroke-width="0.95"/><rect x="7.3" y="2.2" width="4.6" height="2.8" rx="1.2" transform="rotate(38 9.6 3.6)" stroke="#fff" stroke-width="0.95"/></svg>
<svg style="position:absolute;overflow:visible;left:346.23px;top:352.01px;" width="11.57" height="12.46" viewBox="0 0 13 14" fill="none"><circle cx="6.3" cy="5.5" r="1.95" stroke="#fff" stroke-width="1.1"/><path d="M2.3 12.2 Q2.2 9.7 6.3 9.7 Q10.4 9.7 10.4 12.2 Z" stroke="#fff" stroke-width="1.4" stroke-linejoin="round"/></svg>
<svg style="position:absolute;overflow:visible;left:346.23px;top:377.82px;" width="10.68" height="10.68" viewBox="0 0 12 12" fill="none"><polygon points="6.00,0.50 7.19,1.56 8.75,1.24 9.25,2.75 10.76,3.25 10.44,4.81 11.50,6.00 10.44,7.19 10.76,8.75 9.25,9.25 8.75,10.76 7.19,10.44 6.00,11.50 4.81,10.44 3.25,10.76 2.75,9.25 1.24,8.75 1.56,7.19 0.50,6.00 1.56,4.81 1.24,3.25 2.75,2.75 3.25,1.24 4.81,1.56" stroke="#fff" stroke-width="1.0" stroke-linejoin="round"/><path d="M3.5 6.6 L5.2 8.1 L8.9 4.3" stroke="#fff" stroke-width="1.05"/></svg>
<svg style="position:absolute;overflow:visible;left:346.23px;top:400.96px;" width="11.57" height="12.46" viewBox="0 0 13 14" fill="none"><path d="M1.3 1.4 V12.7 H11.4" stroke="#fff" stroke-width="1.2"/><path d="M3.4 8.6 L5.9 5.8 L8 7.8 L10.9 5.4" stroke="#fff" stroke-width="1.0"/></svg>
<svg style="position:absolute;overflow:visible;left:346.23px;top:425.88px;" width="11.57" height="11.57" viewBox="0 0 13 13" fill="none"><path d="M1.1 2.8 H7.4 M9.5 2.8 H11.4 M1.1 6.4 H3.2 M5.0 6.4 H11.4 M1.1 9.6 H5.2 M7.3 9.6 H11.4" stroke="#fff" stroke-width="1.25"/><path d="M8.6 1.2 V4.4 M4.0 5.0 V7.8 M6.4 8.0 V11.4" stroke="#fff" stroke-width="1.25"/></svg>
<div class="t" style="left:342.80px;top:597.30px;font-size:3.7px;color:#fff;font-weight:normal;transform:scaleX(0.95);transform-origin:0 0;">V25.02.03</div>
<div class="t" style="left:371.40px;top:332.92px;font-size:4.5px;color:#222;font-weight:normal;">Epidemiology</div>
<svg style="position:absolute;overflow:visible;left:408.70px;top:331.30px;" width="3.00" height="5.00" viewBox="0 0 6 10" fill="none"><path d="M1.3 1.3 L4.6 5 L1.3 8.7" stroke="#2050d8" stroke-width="2.3"/></svg>
<div class="t" style="left:421.70px;top:332.92px;font-size:4.5px;color:#222;font-weight:normal;">Statistics</div>
<svg style="position:absolute;overflow:visible;left:449.50px;top:331.30px;" width="3.00" height="5.00" viewBox="0 0 6 10" fill="none"><path d="M1.3 1.3 L4.6 5 L1.3 8.7" stroke="#2050d8" stroke-width="2.3"/></svg>
<div class="t" style="left:462.30px;top:332.74px;font-size:4.6px;color:#000;font-weight:bold;transform:scaleX(0.92);transform-origin:0 0;">Statistics</div>
<div style="left:807.20px;top:350.60px;width:31.20px;height:14.10px;border:1px solid #6f789e;border-radius:2px;background:#fff"></div>
<div class="t" style="left:821.00px;top:356.74px;font-size:4.7px;color:#1a2250;font-weight:bold;transform:scaleX(0.9);transform-origin:0 0;">Reset</div>
<svg style="position:absolute;overflow:visible;left:813.60px;top:355.60px;" width="4.60" height="4.60" viewBox="0 0 10 10" fill="none"><path d="M0.5 0.8 H8.5 L5.5 4.5 V9.5 L3.5 8.5 V4.5 Z" stroke="#1f2a55" stroke-width="1.5"/><path d="M7 7 L9.5 9.5 M9.5 7 L7 9.5" stroke="#1f2a55" stroke-width="1"/></svg>
<div style="left:844.70px;top:350.60px;width:40.00px;height:14.10px;border:1px solid #6f789e;border-radius:2px;background:#fff"></div>
<div class="t" style="left:859.00px;top:356.74px;font-size:4.7px;color:#1a2250;font-weight:bold;transform:scaleX(0.9);transform-origin:0 0;">Duplicate</div>
<svg style="position:absolute;overflow:visible;left:851.00px;top:355.20px;" width="5.00" height="5.60" viewBox="0 0 10 11" fill="none"><rect x="1" y="1" width="6" height="7" stroke="#1f2a55" stroke-width="1.1"/><rect x="3" y="3" width="6" height="7" fill="#fff" stroke="#1f2a55" stroke-width="1.1"/></svg>
<div style="left:891.00px;top:350.60px;width:36.70px;height:14.10px;border:1px solid #cfd3de;border-radius:2px;background:#fff"></div>
<div class="t" style="left:905.00px;top:356.74px;font-size:4.7px;color:#b8bcc8;font-weight:bold;transform:scaleX(0.9);transform-origin:0 0;">Register</div>
<svg style="position:absolute;overflow:visible;left:897.60px;top:355.50px;" width="5.00" height="5.00" viewBox="0 0 10 10" fill="none"><rect x="1" y="1" width="8" height="8" stroke="#b8bcc8" stroke-width="1.1"/><rect x="3" y="5" width="4" height="4" stroke="#b8bcc8"/></svg>
<div style="left:934.50px;top:351.00px;width:30.70px;height:13.40px;background:#a3b8ef;border-radius:2px"></div>
<svg style="position:absolute;overflow:visible;left:940.50px;top:355.60px;" width="5.00" height="5.00" viewBox="0 0 10 10" fill="none"><circle cx="5" cy="5" r="4" stroke="#fff" stroke-width="1.1"/><path d="M3 5 L4.5 6.5 L7 3.5" stroke="#fff" stroke-width="1.1"/></svg>
<div class="t" style="left:948.50px;top:356.74px;font-size:4.8px;color:#fff;font-weight:bold;transform:scaleX(0.9);transform-origin:0 0;">Apply</div>
<div style="left:374.40px;top:390.30px;width:52.20px;height:13.10px;border:1px solid #c9ccd6;border-radius:2px;background:#f1f2f5"></div>
<svg style="position:absolute;overflow:visible;left:379.00px;top:395.00px;" width="5.00" height="3.60" viewBox="0 0 12 8" fill="none"><path d="M1 4 Q6 -1 11 4 Q6 9 1 4 Z" stroke="#9aa0b4" stroke-width="1"/><circle cx="6" cy="4" r="1.5" fill="#9aa0b4"/></svg>
<div class="t" style="left:387.20px;top:395.84px;font-size:4.6px;color:#9aa0b4;font-weight:bold;transform:scaleX(0.88);transform-origin:0 0;">View duplicates</div>
<div style="left:438.00px;top:391.00px;width:57.30px;height:11.80px;border:1px solid #888ea6;border-radius:6px;background:#e9eaee"></div>
<div style="left:465.30px;top:391.00px;width:30.00px;height:11.80px;background:#071a58;border-radius:6px"></div>
<div class="t" style="left:444.60px;top:395.40px;font-size:4.4px;color:#8a8e9c;font-weight:normal;transform:scaleX(0.95);transform-origin:0 0;">GROUP</div>
<div class="t" style="left:470.80px;top:395.40px;font-size:4.4px;color:#fff;font-weight:normal;transform:scaleX(0.95);transform-origin:0 0;">STACKED</div>
<div style="left:503.80px;top:394.40px;width:10.80px;height:5.20px;background:#e4e5ea;border-radius:3px"></div>
<div style="left:503.9px;top:394.4px;width:5.2px;height:5.2px;border-radius:50%;background:#fff;box-shadow:0 0 1px rgba(0,0,0,0.35)"></div>
<div class="t" style="left:517.20px;top:395.84px;font-size:4.6px;color:#28305c;font-weight:bold;transform:scaleX(0.85);transform-origin:0 0;">Show only selected items</div>
<div style="left:897.00px;top:409.30px;width:77.60px;height:1.30px;background:#6a8ae8"></div>
<div style="left:929.60px;top:408.80px;width:37.20px;height:2.00px;background:#1840c8"></div>
<svg style="position:absolute;overflow:visible;left:906.50px;top:401.00px;" width="6.00" height="5.00" viewBox="0 0 12 10" fill="none"><rect x="0.5" y="0.5" width="11" height="9" fill="#222"/><path d="M0.5 5 H11.5 M4 0.5 V9.5 M8 0.5 V9.5" stroke="#888" stroke-width="0.6"/></svg>
<svg style="position:absolute;overflow:visible;left:930.50px;top:400.00px;" width="6.00" height="6.00" viewBox="0 0 12 12" fill="none"><path d="M1 0 V11 H12" stroke="#222" stroke-width="1.2"/><path d="M3.5 10 V5 M6.5 10 V3 M9.5 10 V7" stroke="#222" stroke-width="1.2"/></svg>
<div class="t" style="left:942.00px;top:401.34px;font-size:5.0px;color:#111;font-weight:bold;">Histogram</div>
<div style="left:371.30px;top:411.30px;width:603.70px;height:193.70px;background:#fff"></div>
<div style="left:426.40px;top:414.45px;width:522.80px;height:0.70px;background:#f0f0f0"></div>
<div class="t" style="left:422.80px;top:413.30px;font-size:3.9px;color:#444;transform:translateX(-100%);">160</div>
<div style="left:426.40px;top:434.30px;width:522.80px;height:0.70px;background:#f0f0f0"></div>
<div class="t" style="left:422.80px;top:433.15px;font-size:3.9px;color:#444;transform:translateX(-100%);">140</div>
<div style="left:426.40px;top:454.15px;width:522.80px;height:0.70px;background:#f0f0f0"></div>
<div class="t" style="left:422.80px;top:453.00px;font-size:3.9px;color:#444;transform:translateX(-100%);">120</div>
<div style="left:426.40px;top:474.00px;width:522.80px;height:0.70px;background:#f0f0f0"></div>
<div class="t" style="left:422.80px;top:472.85px;font-size:3.9px;color:#444;transform:translateX(-100%);">100</div>
<div style="left:426.40px;top:493.85px;width:522.80px;height:0.70px;background:#f0f0f0"></div>
<div class="t" style="left:422.80px;top:492.70px;font-size:3.9px;color:#444;transform:translateX(-100%);">80</div>
<div style="left:426.40px;top:513.70px;width:522.80px;height:0.70px;background:#f0f0f0"></div>
<div class="t" style="left:422.80px;top:512.55px;font-size:3.9px;color:#444;transform:translateX(-100%);">60</div>
<div style="left:426.40px;top:533.55px;width:522.80px;height:0.70px;background:#f0f0f0"></div>
<div class="t" style="left:422.80px;top:532.40px;font-size:3.9px;color:#444;transform:translateX(-100%);">40</div>
<div style="left:426.40px;top:553.40px;width:522.80px;height:0.70px;background:#f0f0f0"></div>
<div class="t" style="left:422.80px;top:552.25px;font-size:3.9px;color:#444;transform:translateX(-100%);">20</div>
<div style="left:426.40px;top:573.25px;width:522.80px;height:0.70px;background:#f0f0f0"></div>
<div class="t" style="left:422.80px;top:572.10px;font-size:3.9px;color:#444;transform:translateX(-100%);">0</div>
<div style="left:426.05px;top:414.80px;width:0.70px;height:158.80px;background:#f0f0f0"></div>
<div style="left:440.99px;top:414.80px;width:0.70px;height:158.80px;background:#f0f0f0"></div>
<div style="left:455.92px;top:414.80px;width:0.70px;height:158.80px;background:#f0f0f0"></div>
<div style="left:470.86px;top:414.80px;width:0.70px;height:158.80px;background:#f0f0f0"></div>
<div style="left:485.80px;top:414.80px;width:0.70px;height:158.80px;background:#f0f0f0"></div>
<div style="left:500.74px;top:414.80px;width:0.70px;height:158.80px;background:#f0f0f0"></div>
<div style="left:515.67px;top:414.80px;width:0.70px;height:158.80px;background:#f0f0f0"></div>
<div style="left:530.61px;top:414.80px;width:0.70px;height:158.80px;background:#f0f0f0"></div>
<div style="left:545.55px;top:414.80px;width:0.70px;height:158.80px;background:#f0f0f0"></div>
<div style="left:560.48px;top:414.80px;width:0.70px;height:158.80px;background:#f0f0f0"></div>
<div style="left:575.42px;top:414.80px;width:0.70px;height:158.80px;background:#f0f0f0"></div>
<div style="left:590.36px;top:414.80px;width:0.70px;height:158.80px;background:#f0f0f0"></div>
<div style="left:605.30px;top:414.80px;width:0.70px;height:158.80px;background:#f0f0f0"></div>
<div style="left:620.23px;top:414.80px;width:0.70px;height:158.80px;background:#f0f0f0"></div>
<div style="left:635.17px;top:414.80px;width:0.70px;height:158.80px;background:#f0f0f0"></div>
<div style="left:650.11px;top:414.80px;width:0.70px;height:158.80px;background:#f0f0f0"></div>
<div style="left:665.04px;top:414.80px;width:0.70px;height:158.80px;background:#f0f0f0"></div>
<div style="left:679.98px;top:414.80px;width:0.70px;height:158.80px;background:#f0f0f0"></div>
<div style="left:694.92px;top:414.80px;width:0.70px;height:158.80px;background:#f0f0f0"></div>
<div style="left:709.86px;top:414.80px;width:0.70px;height:158.80px;background:#f0f0f0"></div>
<div style="left:724.79px;top:414.80px;width:0.70px;height:158.80px;background:#f0f0f0"></div>
<div style="left:739.73px;top:414.80px;width:0.70px;height:158.80px;background:#f0f0f0"></div>
<div style="left:754.67px;top:414.80px;width:0.70px;height:158.80px;background:#f0f0f0"></div>
<div style="left:769.60px;top:414.80px;width:0.70px;height:158.80px;background:#f0f0f0"></div>
<div style="left:784.54px;top:414.80px;width:0.70px;height:158.80px;background:#f0f0f0"></div>
<div style="left:799.48px;top:414.80px;width:0.70px;height:158.80px;background:#f0f0f0"></div>
<div style="left:814.42px;top:414.80px;width:0.70px;height:158.80px;background:#f0f0f0"></div>
<div style="left:829.35px;top:414.80px;width:0.70px;height:158.80px;background:#f0f0f0"></div>
<div style="left:844.29px;top:414.80px;width:0.70px;height:158.80px;background:#f0f0f0"></div>
<div style="left:859.23px;top:414.80px;width:0.70px;height:158.80px;background:#f0f0f0"></div>
<div style="left:874.16px;top:414.80px;width:0.70px;height:158.80px;background:#f0f0f0"></div>
<div style="left:889.10px;top:414.80px;width:0.70px;height:158.80px;background:#f0f0f0"></div>
<div style="left:904.04px;top:414.80px;width:0.70px;height:158.80px;background:#f0f0f0"></div>
<div style="left:918.98px;top:414.80px;width:0.70px;height:158.80px;background:#f0f0f0"></div>
<div style="left:933.91px;top:414.80px;width:0.70px;height:158.80px;background:#f0f0f0"></div>
<div style="left:948.85px;top:414.80px;width:0.70px;height:158.80px;background:#f0f0f0"></div>
<div style="left:428.60px;top:425.72px;width:10.60px;height:65.50px;background:#ee0000"></div>
<div style="left:428.60px;top:491.22px;width:10.60px;height:82.38px;background:#29a03b"></div>
<div style="left:443.54px;top:425.72px;width:10.60px;height:40.69px;background:#ee0000"></div>
<div style="left:443.54px;top:466.41px;width:10.60px;height:107.19px;background:#29a03b"></div>
<div style="left:458.47px;top:425.72px;width:10.60px;height:85.35px;background:#ee0000"></div>
<div style="left:458.47px;top:511.07px;width:10.60px;height:31.76px;background:#f05200"></div>
<div style="left:458.47px;top:542.83px;width:10.60px;height:30.77px;background:#29a03b"></div>
<div style="left:473.41px;top:426.71px;width:10.60px;height:113.14px;background:#ee0000"></div>
<div style="left:473.41px;top:539.86px;width:10.60px;height:33.75px;background:#29a03b"></div>
<div style="left:488.35px;top:428.70px;width:10.60px;height:8.93px;background:#ee0000"></div>
<div style="left:488.35px;top:437.63px;width:10.60px;height:135.97px;background:#29a03b"></div>
<div style="left:503.29px;top:428.70px;width:10.60px;height:94.29px;background:#ee0000"></div>
<div style="left:503.29px;top:522.98px;width:10.60px;height:7.94px;background:#f05200"></div>
<div style="left:503.29px;top:530.92px;width:10.60px;height:42.68px;background:#29a03b"></div>
<div style="left:518.22px;top:428.70px;width:10.60px;height:10.92px;background:#ee0000"></div>
<div style="left:518.22px;top:439.61px;width:10.60px;height:133.99px;background:#29a03b"></div>
<div style="left:533.16px;top:430.68px;width:10.60px;height:0.99px;background:#ee0000"></div>
<div style="left:533.16px;top:431.67px;width:10.60px;height:7.94px;background:#f05200"></div>
<div style="left:533.16px;top:439.61px;width:10.60px;height:133.99px;background:#29a03b"></div>
<div style="left:548.10px;top:432.67px;width:10.60px;height:112.15px;background:#ee0000"></div>
<div style="left:548.10px;top:544.82px;width:10.60px;height:28.78px;background:#29a03b"></div>
<div style="left:563.03px;top:432.67px;width:10.60px;height:113.15px;background:#ee0000"></div>
<div style="left:563.03px;top:545.81px;width:10.60px;height:2.98px;background:#f05200"></div>
<div style="left:563.03px;top:548.79px;width:10.60px;height:24.81px;background:#29a03b"></div>
<div style="left:577.97px;top:432.67px;width:10.60px;height:36.72px;background:#ee0000"></div>
<div style="left:577.97px;top:469.39px;width:10.60px;height:19.85px;background:#f05200"></div>
<div style="left:577.97px;top:489.24px;width:10.60px;height:84.36px;background:#29a03b"></div>
<div style="left:592.91px;top:432.67px;width:10.60px;height:82.38px;background:#ee0000"></div>
<div style="left:592.91px;top:515.04px;width:10.60px;height:58.56px;background:#29a03b"></div>
<div style="left:607.85px;top:433.66px;width:10.60px;height:130.02px;background:#ee0000"></div>
<div style="left:607.85px;top:563.68px;width:10.60px;height:4.96px;background:#f05200"></div>
<div style="left:607.85px;top:568.64px;width:10.60px;height:4.96px;background:#29a03b"></div>
<div style="left:622.78px;top:433.66px;width:10.60px;height:74.44px;background:#ee0000"></div>
<div style="left:622.78px;top:508.10px;width:10.60px;height:65.50px;background:#29a03b"></div>
<div style="left:637.72px;top:435.64px;width:10.60px;height:137.96px;background:#ee0000"></div>
<div style="left:652.66px;top:436.63px;width:10.60px;height:124.06px;background:#ee0000"></div>
<div style="left:652.66px;top:560.70px;width:10.60px;height:12.90px;background:#29a03b"></div>
<div style="left:667.59px;top:436.63px;width:10.60px;height:77.42px;background:#ee0000"></div>
<div style="left:667.59px;top:514.05px;width:10.60px;height:28.78px;background:#f05200"></div>
<div style="left:667.59px;top:542.83px;width:10.60px;height:30.77px;background:#29a03b"></div>
<div style="left:682.53px;top:437.63px;width:10.60px;height:110.17px;background:#ee0000"></div>
<div style="left:682.53px;top:547.80px;width:10.60px;height:25.80px;background:#29a03b"></div>
<div style="left:697.47px;top:438.62px;width:10.60px;height:131.01px;background:#ee0000"></div>
<div style="left:697.47px;top:569.63px;width:10.60px;height:3.97px;background:#29a03b"></div>
<div style="left:712.41px;top:439.61px;width:10.60px;height:87.34px;background:#ee0000"></div>
<div style="left:712.41px;top:526.95px;width:10.60px;height:30.77px;background:#f05200"></div>
<div style="left:712.41px;top:557.72px;width:10.60px;height:15.88px;background:#29a03b"></div>
<div style="left:727.34px;top:442.59px;width:10.60px;height:96.27px;background:#ee0000"></div>
<div style="left:727.34px;top:538.86px;width:10.60px;height:16.87px;background:#f05200"></div>
<div style="left:727.34px;top:555.74px;width:10.60px;height:17.87px;background:#29a03b"></div>
<div style="left:742.28px;top:444.58px;width:10.60px;height:59.55px;background:#ee0000"></div>
<div style="left:742.28px;top:504.12px;width:10.60px;height:69.48px;background:#29a03b"></div>
<div style="left:757.22px;top:444.58px;width:10.60px;height:3.97px;background:#f05200"></div>
<div style="left:757.22px;top:448.55px;width:10.60px;height:125.06px;background:#29a03b"></div>
<div style="left:772.15px;top:444.58px;width:10.60px;height:3.97px;background:#ee0000"></div>
<div style="left:772.15px;top:448.55px;width:10.60px;height:125.06px;background:#29a03b"></div>
<div style="left:787.09px;top:444.58px;width:10.60px;height:72.45px;background:#ee0000"></div>
<div style="left:787.09px;top:517.03px;width:10.60px;height:38.71px;background:#f05200"></div>
<div style="left:787.09px;top:555.74px;width:10.60px;height:17.87px;background:#29a03b"></div>
<div style="left:802.03px;top:445.57px;width:10.60px;height:128.03px;background:#ee0000"></div>
<div style="left:816.97px;top:447.55px;width:10.60px;height:9.93px;background:#ee0000"></div>
<div style="left:816.97px;top:457.48px;width:10.60px;height:116.12px;background:#f05200"></div>
<div style="left:831.90px;top:456.49px;width:10.60px;height:117.12px;background:#ee0000"></div>
<div style="left:846.84px;top:459.46px;width:10.60px;height:29.77px;background:#ee0000"></div>
<div style="left:846.84px;top:489.24px;width:10.60px;height:84.36px;background:#29a03b"></div>
<div style="left:861.78px;top:471.37px;width:10.60px;height:101.24px;background:#ee0000"></div>
<div style="left:861.78px;top:572.61px;width:10.60px;height:0.99px;background:#f05200"></div>
<div style="left:876.71px;top:471.37px;width:10.60px;height:101.24px;background:#ee0000"></div>
<div style="left:876.71px;top:572.61px;width:10.60px;height:0.99px;background:#29a03b"></div>
<div style="left:891.65px;top:512.07px;width:10.60px;height:1.99px;background:#ee0000"></div>
<div style="left:891.65px;top:514.05px;width:10.60px;height:4.96px;background:#f05200"></div>
<div style="left:891.65px;top:519.01px;width:10.60px;height:54.59px;background:#29a03b"></div>
<div style="left:906.59px;top:521.00px;width:10.60px;height:52.60px;background:#29a03b"></div>
<div style="left:921.53px;top:563.68px;width:10.60px;height:9.92px;background:#29a03b"></div>
<div style="left:936.46px;top:563.68px;width:10.60px;height:9.92px;background:#29a03b"></div>
<div style="left:371.3px;top:411.3px;width:603.7px;height:193.7px;overflow:hidden"><div class="t" style="position:absolute;left:63.77px;top:165.50px;font-size:4.1px;color:#555;transform:translateX(-100%) rotate(-26deg);transform-origin:100% 50%;">Amoxicilline/acide clavulanique (autre)</div><div class="t" style="position:absolute;left:78.71px;top:165.50px;font-size:4.1px;color:#555;transform:translateX(-100%) rotate(-26deg);transform-origin:100% 50%;">Amoxicilline/acide clavulanique (urine)</div><div class="t" style="position:absolute;left:93.64px;top:165.50px;font-size:4.1px;color:#555;transform:translateX(-100%) rotate(-26deg);transform-origin:100% 50%;">Ceftazidime</div><div class="t" style="position:absolute;left:108.58px;top:165.50px;font-size:4.1px;color:#555;transform:translateX(-100%) rotate(-26deg);transform-origin:100% 50%;">Trimethoprime/sulfamethoxazole</div><div class="t" style="position:absolute;left:123.52px;top:165.50px;font-size:4.1px;color:#555;transform:translateX(-100%) rotate(-26deg);transform-origin:100% 50%;">Amikacine</div><div class="t" style="position:absolute;left:138.45px;top:165.50px;font-size:4.1px;color:#555;transform:translateX(-100%) rotate(-26deg);transform-origin:100% 50%;">Ciprofloxacine</div><div class="t" style="position:absolute;left:153.39px;top:165.50px;font-size:4.1px;color:#555;transform:translateX(-100%) rotate(-26deg);transform-origin:100% 50%;">Ertapeneme</div><div class="t" style="position:absolute;left:168.33px;top:165.50px;font-size:4.1px;color:#555;transform:translateX(-100%) rotate(-26deg);transform-origin:100% 50%;">Imipeneme</div><div class="t" style="position:absolute;left:183.27px;top:165.50px;font-size:4.1px;color:#555;transform:translateX(-100%) rotate(-26deg);transform-origin:100% 50%;">Acide nalidixique</div><div class="t" style="position:absolute;left:198.20px;top:165.50px;font-size:4.1px;color:#555;transform:translateX(-100%) rotate(-26deg);transform-origin:100% 50%;">Ofloxacine</div><div class="t" style="position:absolute;left:213.14px;top:165.50px;font-size:4.1px;color:#555;transform:translateX(-100%) rotate(-26deg);transform-origin:100% 50%;">Piperacilline/tazobactam</div><div class="t" style="position:absolute;left:228.08px;top:165.50px;font-size:4.1px;color:#555;transform:translateX(-100%) rotate(-26deg);transform-origin:100% 50%;">Tobramycine</div><div class="t" style="position:absolute;left:243.01px;top:165.50px;font-size:4.1px;color:#555;transform:translateX(-100%) rotate(-26deg);transform-origin:100% 50%;">Cefoxitine</div><div class="t" style="position:absolute;left:257.95px;top:165.50px;font-size:4.1px;color:#555;transform:translateX(-100%) rotate(-26deg);transform-origin:100% 50%;">Gentamicine</div><div class="t" style="position:absolute;left:272.89px;top:165.50px;font-size:4.1px;color:#555;transform:translateX(-100%) rotate(-26deg);transform-origin:100% 50%;">Ticarcilline</div><div class="t" style="position:absolute;left:287.83px;top:165.50px;font-size:4.1px;color:#555;transform:translateX(-100%) rotate(-26deg);transform-origin:100% 50%;">Cefixime</div><div class="t" style="position:absolute;left:302.76px;top:165.50px;font-size:4.1px;color:#555;transform:translateX(-100%) rotate(-26deg);transform-origin:100% 50%;">Levofloxacine</div><div class="t" style="position:absolute;left:317.70px;top:165.50px;font-size:4.1px;color:#555;transform:translateX(-100%) rotate(-26deg);transform-origin:100% 50%;">Trimethoprime</div><div class="t" style="position:absolute;left:332.64px;top:165.50px;font-size:4.1px;color:#555;transform:translateX(-100%) rotate(-26deg);transform-origin:100% 50%;">Ceftriaxone</div><div class="t" style="position:absolute;left:347.57px;top:165.50px;font-size:4.1px;color:#555;transform:translateX(-100%) rotate(-26deg);transform-origin:100% 50%;">Cefepime</div><div class="t" style="position:absolute;left:362.51px;top:165.50px;font-size:4.1px;color:#555;transform:translateX(-100%) rotate(-26deg);transform-origin:100% 50%;">Aztreonam</div><div class="t" style="position:absolute;left:377.45px;top:165.50px;font-size:4.1px;color:#555;transform:translateX(-100%) rotate(-26deg);transform-origin:100% 50%;">Chloramphenicol</div><div class="t" style="position:absolute;left:392.39px;top:165.50px;font-size:4.1px;color:#555;transform:translateX(-100%) rotate(-26deg);transform-origin:100% 50%;">Meropeneme (autre)</div><div class="t" style="position:absolute;left:407.32px;top:165.50px;font-size:4.1px;color:#555;transform:translateX(-100%) rotate(-26deg);transform-origin:100% 50%;">Meropeneme (meningite)</div><div class="t" style="position:absolute;left:422.26px;top:165.50px;font-size:4.1px;color:#555;transform:translateX(-100%) rotate(-26deg);transform-origin:100% 50%;">Ticarcilline+ac.clavul.</div><div class="t" style="position:absolute;left:437.20px;top:165.50px;font-size:4.1px;color:#555;transform:translateX(-100%) rotate(-26deg);transform-origin:100% 50%;">Piperacilline</div><div class="t" style="position:absolute;left:452.13px;top:165.50px;font-size:4.1px;color:#555;transform:translateX(-100%) rotate(-26deg);transform-origin:100% 50%;">Temocilline</div><div class="t" style="position:absolute;left:467.07px;top:165.50px;font-size:4.1px;color:#555;transform:translateX(-100%) rotate(-26deg);transform-origin:100% 50%;">Ampicilline</div><div class="t" style="position:absolute;left:482.01px;top:165.50px;font-size:4.1px;color:#555;transform:translateX(-100%) rotate(-26deg);transform-origin:100% 50%;">Nitrofurantoine NCCLS</div><div class="t" style="position:absolute;left:496.95px;top:165.50px;font-size:4.1px;color:#555;transform:translateX(-100%) rotate(-26deg);transform-origin:100% 50%;">Cefuroxime</div><div class="t" style="position:absolute;left:511.88px;top:165.50px;font-size:4.1px;color:#555;transform:translateX(-100%) rotate(-26deg);transform-origin:100% 50%;">Cefuroxime-Axetil</div><div class="t" style="position:absolute;left:526.82px;top:165.50px;font-size:4.1px;color:#555;transform:translateX(-100%) rotate(-26deg);transform-origin:100% 50%;">Cefixime</div><div class="t" style="position:absolute;left:541.76px;top:165.50px;font-size:4.1px;color:#555;transform:translateX(-100%) rotate(-26deg);transform-origin:100% 50%;">Tigecycline</div><div class="t" style="position:absolute;left:556.69px;top:165.50px;font-size:4.1px;color:#555;transform:translateX(-100%) rotate(-26deg);transform-origin:100% 50%;">Fosfomycine</div><div class="t" style="position:absolute;left:571.63px;top:165.50px;font-size:4.1px;color:#555;transform:translateX(-100%) rotate(-26deg);transform-origin:100% 50%;">Mecillinam</div></div>
<div style="left:952.70px;top:503.00px;width:13.90px;height:4.20px;background:#29a03b"></div>
<div class="t" style="left:968.70px;top:504.60px;font-size:3.6px;color:#666;font-weight:normal;">S</div>
<div style="left:952.70px;top:510.50px;width:13.90px;height:4.20px;background:#f05200"></div>
<div class="t" style="left:968.70px;top:512.10px;font-size:3.6px;color:#666;font-weight:normal;">I</div>
<div style="left:952.70px;top:518.00px;width:13.90px;height:4.20px;background:#ee0000"></div>
<div class="t" style="left:968.70px;top:519.60px;font-size:3.6px;color:#666;font-weight:normal;">R</div>
</body></html>
